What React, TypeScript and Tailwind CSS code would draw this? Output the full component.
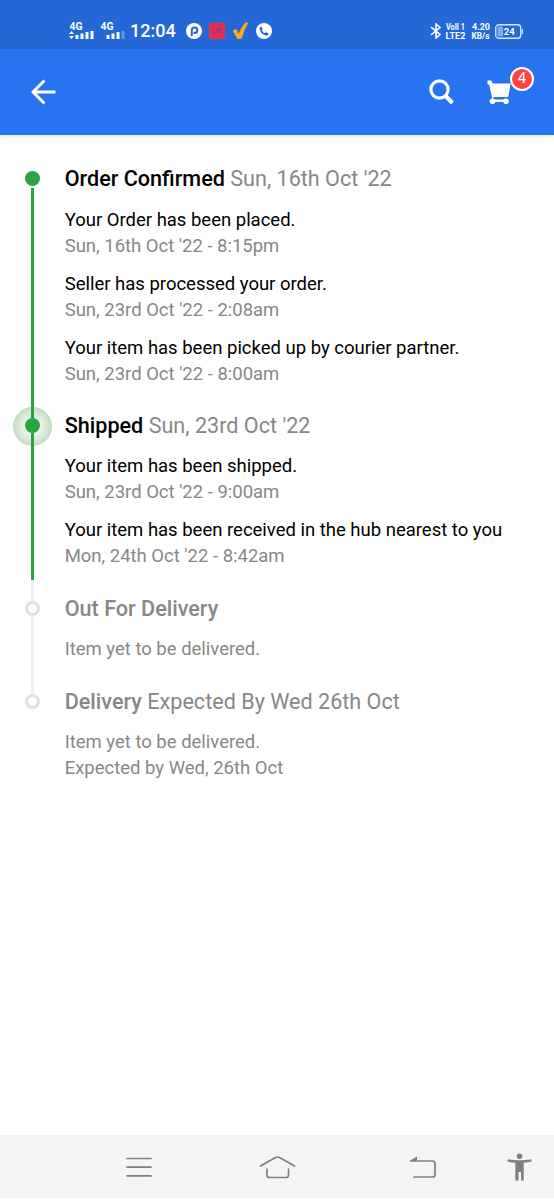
type Update = { text?: string; note?: string; muted?: boolean };

type Step = {
  title: string;
  date?: string;
  state: "done" | "current" | "pending" | "last";
  updates: Update[];
};

const steps: Step[] = [
  {
    title: "Order Confirmed",
    date: "Sun, 16th Oct '22",
    state: "done",
    updates: [
      { text: "Your Order has been placed.", note: "Sun, 16th Oct '22 - 8:15pm" },
      { text: "Seller has processed your order.", note: "Sun, 23rd Oct '22 - 2:08am" },
      { text: "Your item has been picked up by courier partner.", note: "Sun, 23rd Oct '22 - 8:00am" },
    ],
  },
  {
    title: "Shipped",
    date: "Sun, 23rd Oct '22",
    state: "current",
    updates: [
      { text: "Your item has been shipped.", note: "Sun, 23rd Oct '22 - 9:00am" },
      { text: "Your item has been received in the hub nearest to you", note: "Mon, 24th Oct '22 - 8:42am" },
    ],
  },
  {
    title: "Out For Delivery",
    state: "pending",
    updates: [{ text: "Item yet to be delivered.", muted: true }],
  },
  {
    title: "Delivery",
    date: "Expected By Wed 26th Oct",
    state: "last",
    updates: [{ text: "Item yet to be delivered.", note: "Expected by Wed, 26th Oct", muted: true }],
  },
];

function StatusBar() {
  return (
    <div className="flex h-[49px] items-center bg-[#2467d6] pt-[13px] pl-[69px] text-white">
      {/* signal strength */}
      <svg width="26" height="20" viewBox="0 0 26 20" fill="#fff">
        <text x="0.500" y="9" fontSize="10.500" fontWeight="700" textLength="13" lengthAdjust="spacingAndGlyphs">4G</text>
        <path d="M0 13l2.500-3 2.500 3zM0 15h5l-2.500 3z" />
        <path d="M6.500 14h3v4h-3zM11.500 12.500h3v5.500h-3zM16.500 11h3v7h-3zM21.500 10h3v8h-3z" />
      </svg>
      <svg className="ml-[5px]" width="26" height="20" viewBox="0 0 26 20" fill="#fff">
        <text x="0.500" y="9" fontSize="10.500" fontWeight="700" textLength="13" lengthAdjust="spacingAndGlyphs">4G</text>
        <path d="M6.500 14h3v4h-3zM11.500 12.500h3v5.500h-3zM16.500 11h3v7h-3z" />
        <path d="M21.500 10h3v8h-3z" opacity=".3" />
      </svg>
      <span className="ml-1 w-[46px] text-[18px] leading-5 font-medium whitespace-nowrap">12:04</span>
      <svg className="ml-[10px]" width="16" height="16" viewBox="0 0 16 16">
        <circle cx="8" cy="8" r="8" fill="#fff" />
        <path d="M5.800 13V7.300a2.800 2.800 0 1 1 2.800 2.800H7.500" fill="none" stroke="#2467d6" strokeWidth="2" />
      </svg>
      <svg className="ml-[7px]" width="16" height="16" viewBox="0 0 16 16">
        <rect width="16" height="16" rx="1" fill="#ee2b47" />
        <path d="M4 5v3.500q0 2 1.700 2t1.800-2V5M9.500 5.500h3v2h-3zM9.500 9.500h3" fill="none" stroke="#8a3f85" strokeWidth="1.300" />
      </svg>
      <svg className="ml-[7px]" width="17" height="18" viewBox="0 0 17 18">
        <path d="M.5 8.500l4-1.500 2 5Q9.500 4.500 13.500.5l2.800.3Q12 8 9.800 16.500l-4.300.8z" fill="#f9aa1d" />
      </svg>
      <svg className="ml-[7px]" width="16" height="16" viewBox="0 0 16 16">
        <circle cx="8" cy="8" r="8" fill="#fff" />
        <path d="M5.200 3.500l1.500 2.500-.9 1.300q.9 1.900 2.800 2.900l1.300-1 2.600 1.400q-.3 2-2 2.100Q4.300 11.700 3.600 5.500q.1-1.700 1.600-2z" fill="#2467d6" />
      </svg>
      <svg className="ml-[158px]" width="12" height="16" viewBox="0 0 12 16" fill="none" stroke="#fff" strokeWidth="1.600">
        <path d="M1 4.200l9 7.300L6 15V1l4 3.500-9 7.300" />
      </svg>
      <svg className="ml-[3px]" width="22" height="22" viewBox="0 0 22 22" fill="#fff" fontSize="9" fontWeight="700">
        <text x="1" y="10" textLength="19" lengthAdjust="spacingAndGlyphs">VoII 1</text>
        <text x="0.500" y="18.500" textLength="20" lengthAdjust="spacingAndGlyphs">LTE2</text>
      </svg>
      <svg className="ml-1" width="20" height="22" viewBox="0 0 20 22" fill="#fff" fontSize="9" fontWeight="700">
        <text x="1" y="10" textLength="18" lengthAdjust="spacingAndGlyphs">4.20</text>
        <text x="0.500" y="18.500" textLength="18" lengthAdjust="spacingAndGlyphs">KB/s</text>
      </svg>
      <svg className="ml-1" width="28" height="15" viewBox="0 0 28 15">
        <rect x=".75" y=".75" width="25" height="13.500" rx="3" fill="none" stroke="#dce8ff" strokeWidth="1.300" />
        <rect x="2.500" y="2.500" width="5.500" height="10" rx="1" fill="#86a9ea" />
        <path d="M27.200 5v5" stroke="#dce8ff" strokeWidth="1.300" />
        <text x="8.800" y="11" fontSize="9.500" fontWeight="700" fill="#fff">24</text>
      </svg>
    </div>
  );
}

function Header() {
  return (
    <header className="flex h-[86px] items-center bg-[#2874f0] pl-[31px] shadow-[0_1px_4px_rgba(0,0,0,0.15)]">
      <svg width="25" height="26" viewBox="0 0 25 26" fill="none" stroke="#fff" strokeWidth="3">
        <path d="M13.500 1.500L2 13l11.500 11.500M2 13h22.500" strokeLinejoin="round" />
      </svg>
      <svg className="ml-[373px]" width="25" height="26" viewBox="0 0 25 26" fill="none" stroke="#fff">
        <circle cx="10.500" cy="10.500" r="8.600" strokeWidth="3.200" />
        <path d="M16.500 17l7 7" strokeWidth="4" />
      </svg>
      <div className="relative ml-[33px]">
        <svg width="25" height="25" viewBox="0 0 25 25" fill="#fff">
          <path d="M.5.500h3.800l1.300 3H23.500l-2 12.500q-.2 1-1.300 1H6.500l-.5 2.500H20v2.500H5v-4l-.3-2L2.300 5 .5 4z" />
          <circle cx="5.500" cy="21.200" r="2.800" />
          <circle cx="19" cy="21.200" r="2.800" />
        </svg>
        <span className="absolute -top-[13px] left-[23px] flex h-[24px] w-[24px] items-center justify-center rounded-full border-2 border-white bg-[#ff4343] text-[15px] leading-none text-white">
          4
        </span>
      </div>
    </header>
  );
}

function Rail({ state }: { state: Step["state"] }) {
  const reached = state === "done" || state === "current";

  return (
    <div className="relative flex w-[64px] shrink-0 flex-col items-center">
      {state === "current" && (
        <div className="absolute top-[-5px] left-[12.5px] -z-10 h-[39px] w-[39px] rounded-full bg-[radial-gradient(circle_closest-side,#f2f8f2_35%,#c0dcc2_100%)]" />
      )}
      <div className={`h-1.5 w-[3px] shrink-0 ${state === "done" ? "" : reached ? "bg-[#26a541]" : "bg-[#f0f0f0]"}`} />
      <div
        className={`h-[15px] w-[15px] shrink-0 rounded-full ${
          reached ? "bg-[#26a541]" : "border-[3px] border-[#e0e0e0] bg-white"
        }`}
      />
      {state !== "last" && (
        <div className={`w-[3px] flex-1 ${state === "done" ? "mt-0.5" : ""} ${reached ? "bg-[#26a541]" : "bg-[#f0f0f0]"}`} />
      )}
      {state === "current" && <div className="h-[15px] w-[3px] bg-[#f0f0f0]" />}
    </div>
  );
}

function TimelineStep({ step }: { step: Step }) {
  const reached = step.state === "done" || step.state === "current";
  // the first step sits half a pixel lower than the rest
  const spacing = step.state === "done" ? "mt-[14px]" : "mt-[13px]";

  return (
    <li className="flex">
      <Rail state={step.state} />
      <div className={`${step.state === "done" ? "pb-[25px]" : "pb-[26px]"} pl-[0.7px] whitespace-nowrap`}>
        <h2 className={`text-[21.6px] leading-7 ${reached ? "text-black" : "text-[#878787]"}`}>
          <span className="font-medium">{step.title}</span>
          {step.date && <span className="text-[#878787]"> {step.date}</span>}
        </h2>
        <div className={`${spacing} flex flex-col gap-3 text-[18.5px] leading-[26px] tracking-[-0.01px]`}>
          {step.updates.map((update) => (
            <div key={update.text}>
              <p className={update.muted ? "text-[#878787]" : "text-black"}>{update.text}</p>
              {update.note && <p className="text-[#878787]">{update.note}</p>}
            </div>
          ))}
        </div>
      </div>
    </li>
  );
}

function NavBar() {
  return (
    <nav className="mb-0.5 flex h-[63px] items-center bg-[#f4f4f4] pt-px pl-[126px]">
      <svg width="26" height="22" viewBox="0 0 26 22" fill="none" stroke="#808080" strokeWidth="1.700" strokeLinecap="round">
        <path d="M1 2.500h24M1 11.200h24M1 19.900h24" />
      </svg>
      <svg className="ml-[107px]" width="37" height="24" viewBox="0 0 37 24" fill="none" stroke="#808080" strokeWidth="1.700" strokeLinecap="round" strokeLinejoin="round">
        <path d="M1.500 11L16.500 2.500q2-1 4 0L35.500 11M8 14v6q0 2.500 2.500 2.500H27q2.500 0 2.500-2.500v-6" />
      </svg>
      <svg className="ml-[113px]" width="28" height="24" viewBox="0 0 28 24">
        <path d="M.5 6L8 1.500V6z" fill="#808080" />
        <path d="M2 6h21.500q2.500 0 2.500 2.500v11q0 2.500-2.500 2.500H5" fill="none" stroke="#808080" strokeWidth="1.700" strokeLinecap="round" />
      </svg>
      <svg className="ml-[70px]" width="26" height="28" viewBox="0 0 26 28" fill="#808080">
        <circle cx="12.500" cy="3.200" r="2.800" />
        <path d="M.8 6.200q11.700 2.200 23.400 0l.5 2.300q-4 .9-8 1.200V27.500h-2.700v-8.500h-2.500v8.500H8.300V9.700q-4-.3-8-1.200z" />
      </svg>
    </nav>
  );
}

export default function App() {
  return (
    <div className="flex h-[1200px] w-[554px] flex-col overflow-hidden bg-white font-[Roboto,sans-serif]">
      <StatusBar />
      <Header />
      <main className="flex-1 pt-[30px]">
        <ol className="isolate">
          {steps.map((step) => (
            <TimelineStep key={step.title} step={step} />
          ))}
        </ol>
      </main>
      <NavBar />
    </div>
  );
}
